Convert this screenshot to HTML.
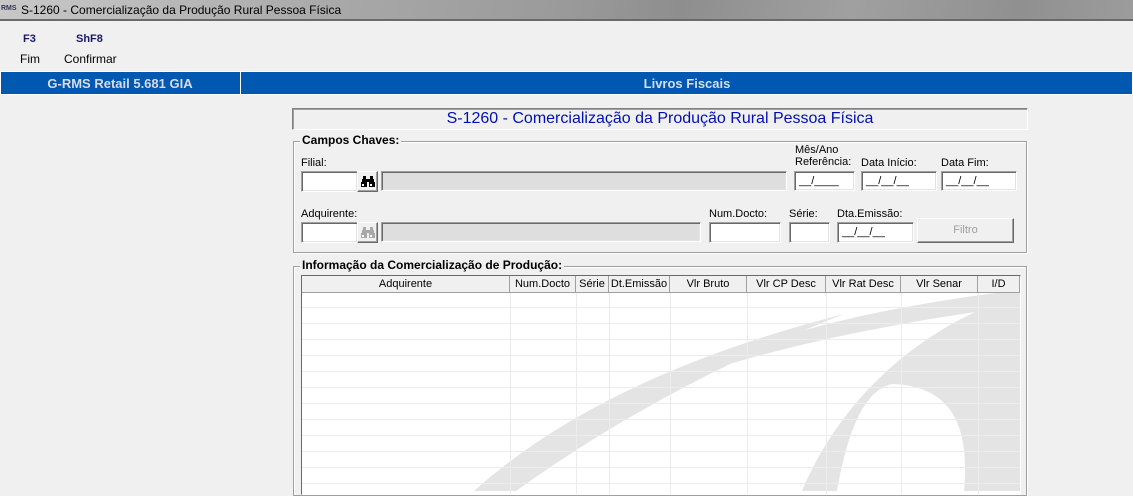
<!DOCTYPE html>
<html><head><meta charset="utf-8"><style>
*{box-sizing:border-box;margin:0;padding:0}
body{width:1133px;height:488px;overflow:hidden;background:#f0f0f0;font-family:"Liberation Sans",sans-serif;font-size:11px;color:#000;position:relative}
.a{position:absolute}
.tb{left:0;top:0;width:1133px;height:21px;background:linear-gradient(100deg,#c8c8c8 0%,#a8a8a8 30%,#9a9a9a 50%,#8e8e8e 60%,#a0a0a0 75%,#909090 90%,#9c9c9c 100%);border-bottom:2px solid #6a6a6a}
.in{background:#fff;border:1px solid;border-color:#a0a0a0 #fff #fff #a0a0a0;box-shadow:inset 1px 1px #696969,inset -1px -1px #e3e3e3;padding:3px 0 0 4px;font-size:11px}
.gr{background:#dedede;border:1px solid;border-color:#a0a0a0 #fff #fff #a0a0a0;box-shadow:inset 1px 1px #696969,inset -1px -1px #e3e3e3}
.btn{background:#f0f0f0;border:1px solid;border-color:#fff #696969 #696969 #fff;box-shadow:inset -1px -1px #a0a0a0}
.grp{border:1px solid #a0a0a0;box-shadow:1px 1px #fff,inset 1px 1px #fff}
.gt{background:#f0f0f0;font-weight:bold;font-size:12px;padding:0 2px;top:-9px;left:6px}
.hd{top:276px;height:17px;background:#f0f0f0;border-right:1px solid #a0a0a0;border-bottom:1px solid #a0a0a0;text-align:center;line-height:16px}
</style></head><body>
<div class="a tb"></div>
<div class="a" style="left:1px;top:5px;font-size:7px;font-weight:bold;color:#335">RMS</div>
<div class="a" style="left:21px;top:3px;font-size:12px;color:#000">S-1260 - Comercialização da Produção Rural Pessoa Física</div>
<div class="a" style="left:23px;top:33px;font-weight:bold;color:#1a1a6a;font-size:11px">F3</div>
<div class="a" style="left:76px;top:33px;font-weight:bold;color:#1a1a6a;font-size:11px">ShF8</div>
<div class="a" style="left:20px;top:52px;font-size:12px">Fim</div>
<div class="a" style="left:64px;top:52px;font-size:12px">Confirmar</div>
<div class="a" style="left:0;top:71px;width:1133px;height:24px;background:#0058b0;border:1px solid #fff;"></div>
<div class="a" style="left:240px;top:71px;width:1px;height:24px;background:#fff"></div>
<div class="a" style="left:0;top:76px;width:240px;text-align:center;color:#d8dce8;font-weight:bold;font-size:13px">G-RMS Retail 5.681 GIA</div>
<div class="a" style="left:241px;top:76px;width:892px;text-align:center;color:#d8dce8;font-weight:bold;font-size:13px">Livros Fiscais</div>

<div class="a" style="left:292px;top:108px;width:736px;height:22px;border:1px solid;border-color:#808080 #fff #fff #808080;box-shadow:inset 1px 1px #a0a0a0"></div>
<div class="a" style="left:292px;top:110px;width:736px;text-align:center;color:#0010b0;font-size:16px">S-1260 - Comercialização da Produção Rural Pessoa Física</div>

<div class="a grp" style="left:293px;top:141px;width:734px;height:112px"><div class="a gt">Campos Chaves:</div></div>
<div class="a" style="left:301px;top:157px">Filial:</div>
<div class="a in" style="left:301px;top:171px;width:57px;height:21px"></div>
<div class="a btn" style="left:357px;top:171px;width:21px;height:21px"><svg class="a" style="left:3px;top:4px" width="14" height="11" viewBox="0 0 14 11"><g fill="#000"><rect x="2" y="0" width="3" height="3"/><rect x="9" y="0" width="3" height="3"/><rect x="1" y="3" width="5" height="3"/><rect x="8" y="3" width="5" height="3"/><rect x="5" y="3" width="4" height="3"/><rect x="0" y="6" width="6" height="5"/><rect x="8" y="6" width="6" height="5"/></g><rect x="1" y="8" width="2" height="2" fill="#fff"/><rect x="9" y="8" width="2" height="2" fill="#fff"/></svg></div>
<div class="a gr" style="left:381px;top:171px;width:406px;height:20px"></div>
<div class="a" style="left:795px;top:144px;line-height:12px">Mês/Ano<br>Referência:</div>
<div class="a" style="left:861px;top:157px">Data Início:</div>
<div class="a" style="left:941px;top:157px">Data Fim:</div>
<div class="a in" style="left:794px;top:171px;width:61px;height:20px">__/____</div>
<div class="a in" style="left:861px;top:171px;width:76px;height:20px">__/__/__</div>
<div class="a in" style="left:941px;top:171px;width:76px;height:20px">__/__/__</div>

<div class="a" style="left:301px;top:208px">Adquirente:</div>
<div class="a in" style="left:301px;top:222px;width:57px;height:21px"></div>
<div class="a btn" style="left:357px;top:222px;width:21px;height:21px"><svg class="a" style="left:3px;top:4px" width="14" height="11" viewBox="0 0 14 11"><g fill="#a8a8a8"><rect x="2" y="0" width="3" height="3"/><rect x="9" y="0" width="3" height="3"/><rect x="1" y="3" width="5" height="3"/><rect x="8" y="3" width="5" height="3"/><rect x="5" y="3" width="4" height="3"/><rect x="0" y="6" width="6" height="5"/><rect x="8" y="6" width="6" height="5"/></g><rect x="1" y="8" width="2" height="2" fill="#fff"/><rect x="9" y="8" width="2" height="2" fill="#fff"/></svg></div>
<div class="a gr" style="left:381px;top:222px;width:320px;height:20px"></div>
<div class="a" style="left:709px;top:208px">Num.Docto:</div>
<div class="a" style="left:789px;top:208px">Série:</div>
<div class="a" style="left:837px;top:208px">Dta.Emissão:</div>
<div class="a in" style="left:709px;top:222px;width:72px;height:21px"></div>
<div class="a in" style="left:789px;top:222px;width:41px;height:21px"></div>
<div class="a in" style="left:837px;top:222px;width:77px;height:21px">__/__/__</div>
<div class="a btn" style="left:917px;top:218px;width:97px;height:25px;text-align:center;line-height:22px;color:#a0a0a0">Filtro</div>

<div class="a grp" style="left:293px;top:266px;width:734px;height:230px"><div class="a gt">Informação da Comercialização de Produção:</div></div>
<div class="a" style="left:301px;top:275px;width:720px;height:220px;background:#fff;border:1px solid;border-color:#696969 #fff #fff #696969;overflow:hidden">
<svg class="a" style="left:0;top:0" width="720" height="220">
<g fill="#e4e4e4">
<path d="M172 215 Q300 100 542 38 Q360 110 214 215 Z"/>
<path d="M500 215 C540 120 620 50 718 18 L718 215 L662 215 C668 150 650 110 590 108 C560 115 545 160 535 215 Z"/>
<path d="M360 110 C450 60 580 30 718 14 L718 30 C600 45 470 70 360 110 Z"/>
</g>
<g stroke="#ececec" stroke-width="1">
<line x1="0" y1="31.5" x2="720" y2="31.5"/><line x1="0" y1="47.5" x2="720" y2="47.5"/><line x1="0" y1="63.5" x2="720" y2="63.5"/><line x1="0" y1="79.5" x2="720" y2="79.5"/><line x1="0" y1="95.5" x2="720" y2="95.5"/><line x1="0" y1="111.5" x2="720" y2="111.5"/><line x1="0" y1="127.5" x2="720" y2="127.5"/><line x1="0" y1="143.5" x2="720" y2="143.5"/><line x1="0" y1="159.5" x2="720" y2="159.5"/><line x1="0" y1="175.5" x2="720" y2="175.5"/><line x1="0" y1="191.5" x2="720" y2="191.5"/><line x1="0" y1="207.5" x2="720" y2="207.5"/>
<line x1="208.5" y1="0" x2="208.5" y2="220"/><line x1="274.5" y1="0" x2="274.5" y2="220"/><line x1="307.5" y1="0" x2="307.5" y2="220"/><line x1="368.5" y1="0" x2="368.5" y2="220"/><line x1="445.5" y1="0" x2="445.5" y2="220"/><line x1="524.5" y1="0" x2="524.5" y2="220"/><line x1="599.5" y1="0" x2="599.5" y2="220"/><line x1="676.5" y1="0" x2="676.5" y2="220"/>
</g>
</svg>
</div>
<div class="a hd" style="left:302px;width:208px">Adquirente</div>
<div class="a hd" style="left:510px;width:66px">Num.Docto</div>
<div class="a hd" style="left:576px;width:33px">Série</div>
<div class="a hd" style="left:609px;width:61px">Dt.Emissão</div>
<div class="a hd" style="left:670px;width:77px">Vlr Bruto</div>
<div class="a hd" style="left:747px;width:79px">Vlr CP Desc</div>
<div class="a hd" style="left:826px;width:75px">Vlr Rat Desc</div>
<div class="a hd" style="left:901px;width:77px">Vlr Senar</div>
<div class="a hd" style="left:978px;width:42px">I/D</div>
</body></html>
